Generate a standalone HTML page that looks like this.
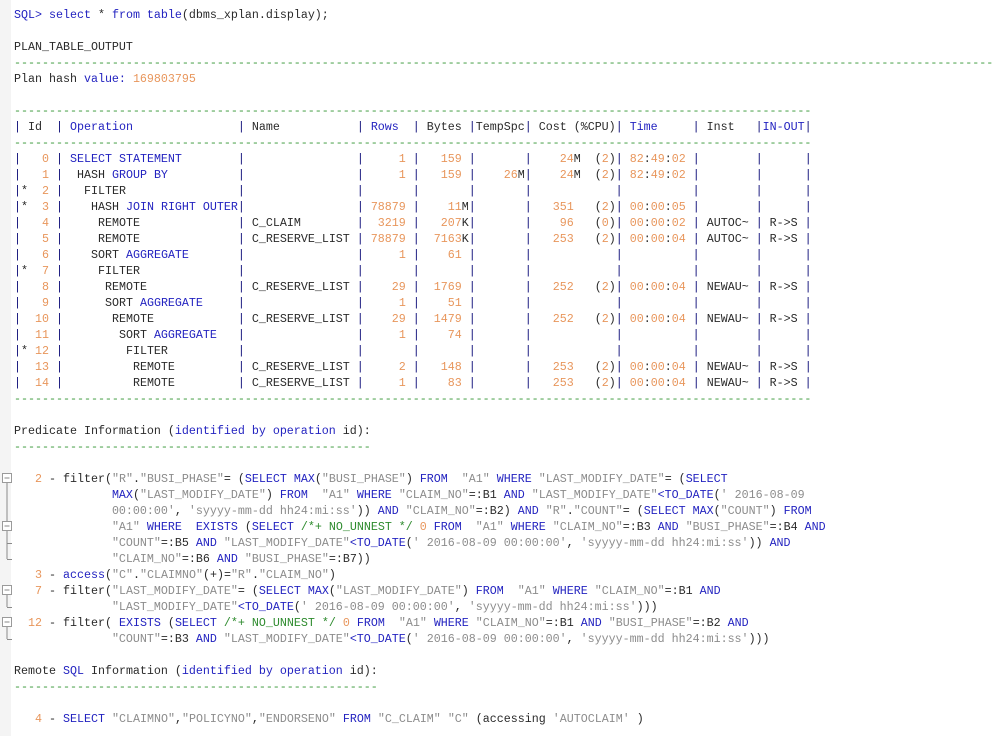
<!DOCTYPE html>
<html><head><meta charset="utf-8"><style>
html,body{margin:0;padding:0;background:#fff;width:993px;height:736px;overflow:hidden;}
pre{position:absolute;left:14px;top:7px;margin:0;font-family:"Liberation Mono","Courier New",monospace;font-size:11.67px;line-height:16px;color:#2a2a2a;white-space:pre;}
u{text-decoration:none;color:#10107a}
b{font-weight:normal;color:#2323c0}
i{font-style:normal;color:#e8965c}
s{text-decoration:none;color:#8c8c8c}
em{font-style:normal;color:#2e8b2e}
.d{color:#3c9a3c}
#g{position:absolute;left:0;top:0}
</style></head><body>
<svg id="g" width="14" height="736" xmlns="http://www.w3.org/2000/svg">
<rect x="0" y="0" width="11" height="736" fill="#f4f4f4"/>
<g fill="#fff" stroke="#9a9a9a" stroke-width="1">
<rect x="2.5" y="473.5" width="9" height="9"/>
<rect x="2.5" y="521.5" width="9" height="9"/>
<rect x="2.5" y="585.5" width="9" height="9"/>
<rect x="2.5" y="617.5" width="9" height="9"/>
</g>
<g stroke="#8a8a8a" stroke-width="1">
<line x1="4.5" y1="478" x2="9.5" y2="478"/>
<line x1="4.5" y1="526" x2="9.5" y2="526"/>
<line x1="4.5" y1="590" x2="9.5" y2="590"/>
<line x1="4.5" y1="622" x2="9.5" y2="622"/>
<line x1="7" y1="483" x2="7" y2="521"/>
<line x1="7" y1="531" x2="7" y2="559"/>
<line x1="7" y1="543.5" x2="12" y2="543.5"/>
<line x1="7" y1="559.5" x2="12" y2="559.5"/>
<line x1="7" y1="595" x2="7" y2="607"/>
<line x1="7" y1="607.5" x2="12" y2="607.5"/>
<line x1="7" y1="627" x2="7" y2="639"/>
<line x1="7" y1="639.5" x2="12" y2="639.5"/>
</g>
</svg>
<pre><b>SQL&gt; select</b> * <b>from table</b>(dbms_xplan.display);

PLAN_TABLE_OUTPUT
<span class="d">--------------------------------------------------------------------------------------------------------------------------------------------------</span>
Plan hash <b>value:</b> <i>169803795</i>

<span class="d">------------------------------------------------------------------------------------------------------------------</span>
<u>|</u> Id  <u>|</u> <b>Operation</b>               <u>|</u> Name           <u>|</u> <b>Rows</b>  <u>|</u> Bytes <u>|</u>TempSpc<u>|</u> Cost (%CPU)<u>|</u> <b>Time</b>     <u>|</u> Inst   <u>|</u><b>IN-OUT</b><u>|</u>
<span class="d">------------------------------------------------------------------------------------------------------------------</span>
<u>|</u>   <i>0</i> <u>|</u> <b>SELECT STATEMENT</b>        <u>|</u>                <u>|</u>     <i>1</i> <u>|</u>   <i>159</i> <u>|</u>       <u>|</u>    <i>24</i>M  (<i>2</i>)<u>|</u> <i>82</i>:<i>49</i>:<i>02</i> <u>|</u>        <u>|</u>      <u>|</u>
<u>|</u>   <i>1</i> <u>|</u>  HASH <b>GROUP BY</b>          <u>|</u>                <u>|</u>     <i>1</i> <u>|</u>   <i>159</i> <u>|</u>    <i>26</i>M<u>|</u>    <i>24</i>M  (<i>2</i>)<u>|</u> <i>82</i>:<i>49</i>:<i>02</i> <u>|</u>        <u>|</u>      <u>|</u>
<u>|</u>*  <i>2</i> <u>|</u>   FILTER                <u>|</u>                <u>|</u>       <u>|</u>       <u>|</u>       <u>|</u>            <u>|</u>          <u>|</u>        <u>|</u>      <u>|</u>
<u>|</u>*  <i>3</i> <u>|</u>    HASH <b>JOIN RIGHT OUTER</b><u>|</u>                <u>|</u> <i>78879</i> <u>|</u>    <i>11</i>M<u>|</u>       <u>|</u>   <i>351</i>   (<i>2</i>)<u>|</u> <i>00</i>:<i>00</i>:<i>05</i> <u>|</u>        <u>|</u>      <u>|</u>
<u>|</u>   <i>4</i> <u>|</u>     REMOTE              <u>|</u> C_CLAIM        <u>|</u>  <i>3219</i> <u>|</u>   <i>207</i>K<u>|</u>       <u>|</u>    <i>96</i>   (<i>0</i>)<u>|</u> <i>00</i>:<i>00</i>:<i>02</i> <u>|</u> AUTOC~ <u>|</u> R-&gt;S <u>|</u>
<u>|</u>   <i>5</i> <u>|</u>     REMOTE              <u>|</u> C_RESERVE_LIST <u>|</u> <i>78879</i> <u>|</u>  <i>7163</i>K<u>|</u>       <u>|</u>   <i>253</i>   (<i>2</i>)<u>|</u> <i>00</i>:<i>00</i>:<i>04</i> <u>|</u> AUTOC~ <u>|</u> R-&gt;S <u>|</u>
<u>|</u>   <i>6</i> <u>|</u>    SORT <b>AGGREGATE</b>       <u>|</u>                <u>|</u>     <i>1</i> <u>|</u>    <i>61</i> <u>|</u>       <u>|</u>            <u>|</u>          <u>|</u>        <u>|</u>      <u>|</u>
<u>|</u>*  <i>7</i> <u>|</u>     FILTER              <u>|</u>                <u>|</u>       <u>|</u>       <u>|</u>       <u>|</u>            <u>|</u>          <u>|</u>        <u>|</u>      <u>|</u>
<u>|</u>   <i>8</i> <u>|</u>      REMOTE             <u>|</u> C_RESERVE_LIST <u>|</u>    <i>29</i> <u>|</u>  <i>1769</i> <u>|</u>       <u>|</u>   <i>252</i>   (<i>2</i>)<u>|</u> <i>00</i>:<i>00</i>:<i>04</i> <u>|</u> NEWAU~ <u>|</u> R-&gt;S <u>|</u>
<u>|</u>   <i>9</i> <u>|</u>      SORT <b>AGGREGATE</b>     <u>|</u>                <u>|</u>     <i>1</i> <u>|</u>    <i>51</i> <u>|</u>       <u>|</u>            <u>|</u>          <u>|</u>        <u>|</u>      <u>|</u>
<u>|</u>  <i>10</i> <u>|</u>       REMOTE            <u>|</u> C_RESERVE_LIST <u>|</u>    <i>29</i> <u>|</u>  <i>1479</i> <u>|</u>       <u>|</u>   <i>252</i>   (<i>2</i>)<u>|</u> <i>00</i>:<i>00</i>:<i>04</i> <u>|</u> NEWAU~ <u>|</u> R-&gt;S <u>|</u>
<u>|</u>  <i>11</i> <u>|</u>        SORT <b>AGGREGATE</b>   <u>|</u>                <u>|</u>     <i>1</i> <u>|</u>    <i>74</i> <u>|</u>       <u>|</u>            <u>|</u>          <u>|</u>        <u>|</u>      <u>|</u>
<u>|</u>* <i>12</i> <u>|</u>         FILTER          <u>|</u>                <u>|</u>       <u>|</u>       <u>|</u>       <u>|</u>            <u>|</u>          <u>|</u>        <u>|</u>      <u>|</u>
<u>|</u>  <i>13</i> <u>|</u>          REMOTE         <u>|</u> C_RESERVE_LIST <u>|</u>     <i>2</i> <u>|</u>   <i>148</i> <u>|</u>       <u>|</u>   <i>253</i>   (<i>2</i>)<u>|</u> <i>00</i>:<i>00</i>:<i>04</i> <u>|</u> NEWAU~ <u>|</u> R-&gt;S <u>|</u>
<u>|</u>  <i>14</i> <u>|</u>          REMOTE         <u>|</u> C_RESERVE_LIST <u>|</u>     <i>1</i> <u>|</u>    <i>83</i> <u>|</u>       <u>|</u>   <i>253</i>   (<i>2</i>)<u>|</u> <i>00</i>:<i>00</i>:<i>04</i> <u>|</u> NEWAU~ <u>|</u> R-&gt;S <u>|</u>
<span class="d">------------------------------------------------------------------------------------------------------------------</span>

Predicate Information (<b>identified by operation</b> id):
<span class="d">---------------------------------------------------</span>

   <i>2</i> - filter(<s>"R"</s>.<s>"BUSI_PHASE"</s>= (<b>SELECT MAX</b>(<s>"BUSI_PHASE"</s>) <b>FROM</b>  <s>"A1"</s> <b>WHERE</b> <s>"LAST_MODIFY_DATE"</s>= (<b>SELECT</b>
              <b>MAX</b>(<s>"LAST_MODIFY_DATE"</s>) <b>FROM</b>  <s>"A1"</s> <b>WHERE</b> <s>"CLAIM_NO"</s>=:B1 <b>AND</b> <s>"LAST_MODIFY_DATE"</s><b>&lt;TO_DATE</b>(<s>' 2016-08-09</s>
              <s>00:00:00'</s>, <s>'syyyy-mm-dd hh24:mi:ss'</s>)) <b>AND</b> <s>"CLAIM_NO"</s>=:B2) <b>AND</b> <s>"R"</s>.<s>"COUNT"</s>= (<b>SELECT MAX</b>(<s>"COUNT"</s>) <b>FROM</b>
              <s>"A1"</s> <b>WHERE</b>  <b>EXISTS</b> (<b>SELECT</b> <em>/*+ NO_UNNEST */</em> <i>0</i> <b>FROM</b>  <s>"A1"</s> <b>WHERE</b> <s>"CLAIM_NO"</s>=:B3 <b>AND</b> <s>"BUSI_PHASE"</s>=:B4 <b>AND</b>
              <s>"COUNT"</s>=:B5 <b>AND</b> <s>"LAST_MODIFY_DATE"</s><b>&lt;TO_DATE</b>(<s>' 2016-08-09 00:00:00'</s>, <s>'syyyy-mm-dd hh24:mi:ss'</s>)) <b>AND</b>
              <s>"CLAIM_NO"</s>=:B6 <b>AND</b> <s>"BUSI_PHASE"</s>=:B7))
   <i>3</i> - <b>access</b>(<s>"C"</s>.<s>"CLAIMNO"</s>(+)=<s>"R"</s>.<s>"CLAIM_NO"</s>)
   <i>7</i> - filter(<s>"LAST_MODIFY_DATE"</s>= (<b>SELECT MAX</b>(<s>"LAST_MODIFY_DATE"</s>) <b>FROM</b>  <s>"A1"</s> <b>WHERE</b> <s>"CLAIM_NO"</s>=:B1 <b>AND</b>
              <s>"LAST_MODIFY_DATE"</s><b>&lt;TO_DATE</b>(<s>' 2016-08-09 00:00:00'</s>, <s>'syyyy-mm-dd hh24:mi:ss'</s>)))
  <i>12</i> - filter( <b>EXISTS</b> (<b>SELECT</b> <em>/*+ NO_UNNEST */</em> <i>0</i> <b>FROM</b>  <s>"A1"</s> <b>WHERE</b> <s>"CLAIM_NO"</s>=:B1 <b>AND</b> <s>"BUSI_PHASE"</s>=:B2 <b>AND</b>
              <s>"COUNT"</s>=:B3 <b>AND</b> <s>"LAST_MODIFY_DATE"</s><b>&lt;TO_DATE</b>(<s>' 2016-08-09 00:00:00'</s>, <s>'syyyy-mm-dd hh24:mi:ss'</s>)))

Remote <b>SQL</b> Information (<b>identified by operation</b> id):
<span class="d">----------------------------------------------------</span>

   <i>4</i> - <b>SELECT</b> <s>"CLAIMNO"</s>,<s>"POLICYNO"</s>,<s>"ENDORSENO"</s> <b>FROM</b> <s>"C_CLAIM"</s> <s>"C"</s> (accessing <s>'AUTOCLAIM'</s> )
</pre>
</body></html>
